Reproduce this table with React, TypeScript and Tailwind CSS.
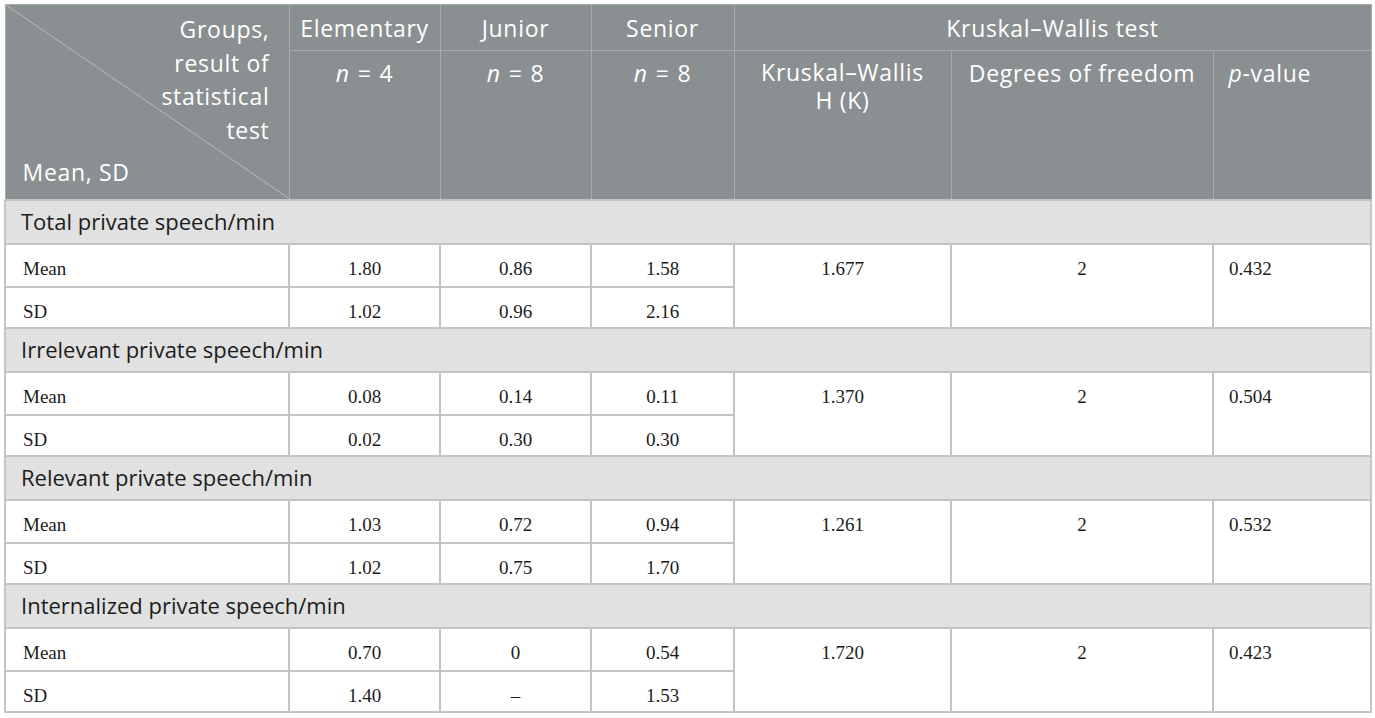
import React from "react";

type Group = {
    title: string;
    mean: string[];
    sd: string[];
    h: string;
    df: string;
    p: string;
};

const groups: Group[] = [
    { title: "Total private speech/min", mean: ["1.80", "0.86", "1.58"], sd: ["1.02", "0.96", "2.16"], h: "1.677", df: "2", p: "0.432" },
    { title: "Irrelevant private speech/min", mean: ["0.08", "0.14", "0.11"], sd: ["0.02", "0.30", "0.30"], h: "1.370", df: "2", p: "0.504" },
    { title: "Relevant private speech/min", mean: ["1.03", "0.72", "0.94"], sd: ["1.02", "0.75", "1.70"], h: "1.261", df: "2", p: "0.532" },
    { title: "Internalized private speech/min", mean: ["0.70", "0", "0.54"], sd: ["1.40", "–", "1.53"], h: "1.720", df: "2", p: "0.423" },
];

const sans = "font-['Open_Sans',_'Noto_Sans',_sans-serif]";
const serif = "font-['Liberation_Serif',_'Times_New_Roman',_serif]";

const thCls = "border border-[#a7abac] font-normal text-white text-[23px] tracking-[0.03em] leading-[28px]";
const tdCls = "border-2 border-[#c3c5c4] text-[19px] text-[#1c1c1c] align-top pt-[10px]";

// "n = 4" with the wide math spacing of the original
const N = ({ v }: { v: string }) => (
    <span>
        <i>n</i>
        <span className="mx-[8px]">=</span>
        {v}
    </span>
);

const App = () => {
    return (
        <div className="w-[1375px] h-[718px] bg-white pl-[4px] pt-[4px]">
            <table className={`table-fixed border-collapse w-[1366px] ${sans}`}>
                <colgroup>
                    <col className="w-[284px]" />
                    <col className="w-[151px]" />
                    <col className="w-[151px]" />
                    <col className="w-[143px]" />
                    <col className="w-[217px]" />
                    <col className="w-[262px]" />
                    <col className="w-[158px]" />
                </colgroup>
                <thead className="bg-[#8a8f91]">
                    <tr className="h-[46px]">
                        <th rowSpan={2} className={`${thCls} align-top relative p-0`}>
                            <svg className="absolute inset-0 w-full h-full" preserveAspectRatio="none" viewBox="0 0 100 100">
                                <line x1="0" y1="0" x2="100" y2="100" stroke="#b9bcbd" strokeWidth="1" vectorEffect="non-scaling-stroke" />
                            </svg>
                            <div className="relative flex flex-col justify-between h-[193px] pt-[8px] pb-[9px]">
                                <div className="text-right pr-[19px] leading-[33.5px]">
                                    <div>Groups,</div>
                                    <div>result of</div>
                                    <div>statistical</div>
                                    <div>test</div>
                                </div>
                                <div className="text-left pl-[17px] leading-[33px]">Mean, SD</div>
                            </div>
                        </th>
                        <th className={`${thCls} align-middle text-center`}>Elementary</th>
                        <th className={`${thCls} align-middle text-center`}>Junior</th>
                        <th className={`${thCls} align-middle text-center`}>Senior</th>
                        <th colSpan={3} className={`${thCls} align-middle text-center`}>Kruskal–Wallis test</th>
                    </tr>
                    <tr className="h-[149px]">
                        <th className={`${thCls} align-top text-center pt-[8px]`}><N v="4" /></th>
                        <th className={`${thCls} align-top text-center pt-[8px]`}><N v="8" /></th>
                        <th className={`${thCls} align-top text-center pt-[8px]`}><N v="8" /></th>
                        <th className={`${thCls} align-top text-center pt-[7px]`}>
                            <div>Kruskal–Wallis</div>
                            <div>H (K)</div>
                        </th>
                        <th className={`${thCls} align-top text-center pt-[8px]`}>Degrees of freedom</th>
                        <th className={`${thCls} align-top text-left pl-[15px] pt-[8px]`}><i>p</i>-value</th>
                    </tr>
                </thead>
                <tbody>
                    {groups.map((g) => (
                        <React.Fragment key={g.title}>
                            <tr className="h-[44px] bg-[#e0e1e0]">
                                <td colSpan={7} className="border-2 border-[#c3c5c4] pl-[15px] text-[22px] text-[#1c1c1c] align-middle">
                                    {g.title}
                                </td>
                            </tr>
                            <tr className={`h-[43px] ${serif}`}>
                                <td className={`${tdCls} pl-[17px]`}>Mean</td>
                                {g.mean.map((v, i) => (
                                    <td key={i} className={`${tdCls} text-center`}>{v}</td>
                                ))}
                                <td rowSpan={2} className={`${tdCls} text-center`}>{g.h}</td>
                                <td rowSpan={2} className={`${tdCls} text-center`}>{g.df}</td>
                                <td rowSpan={2} className={`${tdCls} pl-[15px]`}>{g.p}</td>
                            </tr>
                            <tr className={`h-[41px] ${serif}`}>
                                <td className={`${tdCls} pl-[17px] pt-[9px]`}>SD</td>
                                {g.sd.map((v, i) => (
                                    <td key={i} className={`${tdCls} text-center pt-[9px]`}>{v}</td>
                                ))}
                            </tr>
                        </React.Fragment>
                    ))}
                </tbody>
            </table>
        </div>
    );
};

export default App;
